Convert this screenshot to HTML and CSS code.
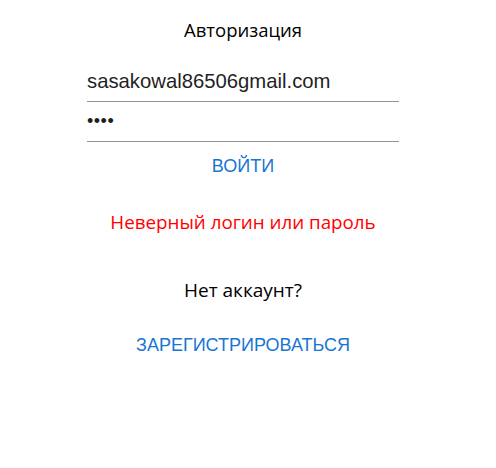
FILE: index.html
```html
<!DOCTYPE html>
<html lang="ru">
<head>
<meta charset="utf-8">
<link rel="stylesheet" href="styles.css">
</head>
<body>
<div class="page">
  <div class="form">
    <h1 class="title">Авторизация</h1>
    <div class="field first"><span class="value">sasakowal86506gmail.com</span></div>
    <div class="field"><span class="value dots">••••</span></div>
    <button class="btn">ВОЙТИ</button>
    <p class="error">Неверный логин или пароль</p>
    <p class="note">Нет аккаунт?</p>
    <button class="btn reg">ЗАРЕГИСТРИРОВАТЬСЯ</button>
  </div>
</div>
</body>
</html>
```
FILE: styles.css
```css
html, body { margin: 0; background: #fff; }
.page { width: 486px; display: flex; justify-content: center; }
.form { width: 312px; display: flex; flex-direction: column; align-items: center; }
.title { font-family: "Open Sans", sans-serif; font-weight: 400; font-size: 18.5px; line-height: 24px; margin: 18px 0 0; color: #000; }
.field { width: 312px; height: 39px; border-bottom: 1px solid #949494; display: flex; align-items: flex-end; }
.field.first { margin-top: 20px; }
.value { font-family: "Liberation Sans", Arial, sans-serif; font-size: 20.3px; line-height: 22px; color: #1f1f1f; padding-bottom: 9px; }
.dots { font-size: 18px; letter-spacing: 0.5px; }
.btn { background: none; border: 0; padding: 0; font-family: "Liberation Sans", Arial, sans-serif; font-size: 18px; color: #1976d2; line-height: 20px; margin-top: 14px; }
.error { font-family: "Open Sans", sans-serif; font-size: 18.8px; line-height: 24px; color: #ff0000; margin: 34px 0 0; }
.note { font-family: "Open Sans", sans-serif; font-size: 19px; line-height: 24px; color: #000; margin: 44px 0 0; }
.reg { margin-top: 33px; }
```
